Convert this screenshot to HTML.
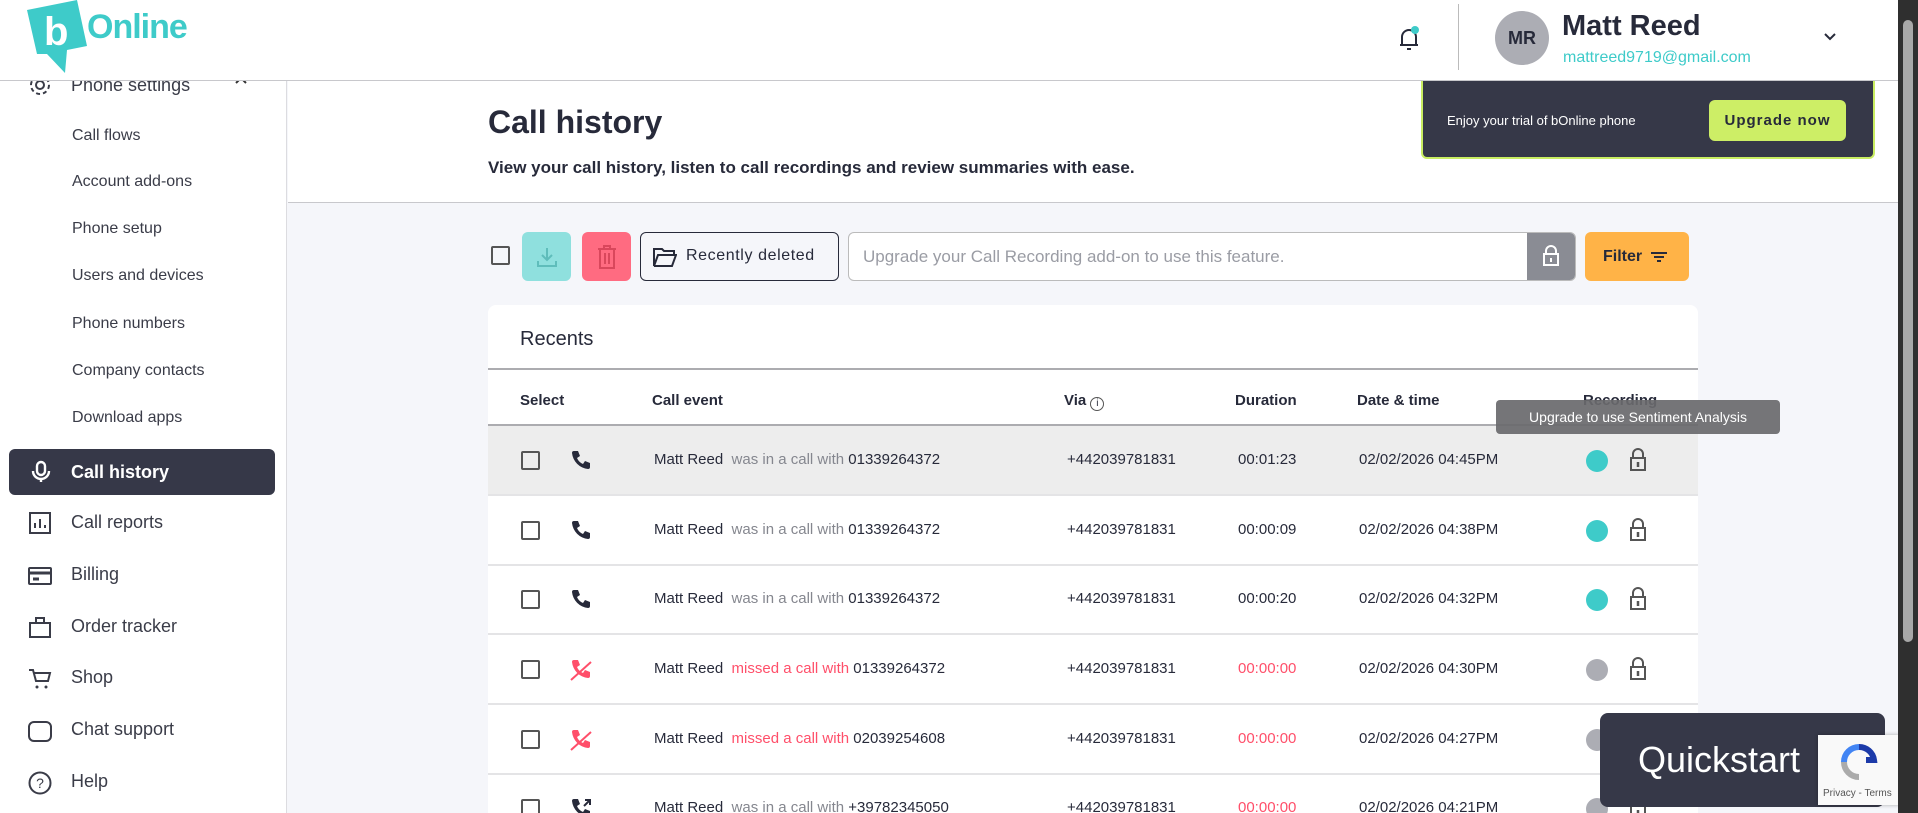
<!DOCTYPE html>
<html><head><meta charset="utf-8"><style>
*{box-sizing:border-box;margin:0;padding:0}
html,body{width:1918px;height:813px;overflow:hidden}
body{font-family:"Liberation Sans",sans-serif;color:#272a3a;background:#f5f6fa;position:relative}
.a{position:absolute}
.hdr{left:0;top:0;width:1898px;height:81px;background:#fff;border-bottom:1px solid #c8c8cc;z-index:5}
.side{left:0;top:81px;width:287px;height:732px;background:#fff;border-right:1px solid #dcdce0;overflow:hidden}
.sub{left:72px;font-size:16px;color:#3a3c48}
.nav{left:71px;font-size:18px;color:#3a3c48}
.ico{left:28px;width:24px;height:24px}
.top{left:288px;top:81px;width:1610px;height:122px;background:#fff;border-bottom:1px solid #c8c8cc}
.card{left:488px;top:305px;width:1210px;height:508px;background:#fff;border-radius:8px 8px 0 0}
.row{left:488px;width:1210px;height:70px;border-bottom:2px solid #e4e4e6;font-size:15px}
.th{font-size:15px;font-weight:bold;top:392px}
</style></head><body>
<div class="a hdr">
 <svg class="a" style="left:27px;top:0" width="185" height="76" viewBox="0 0 185 76">
  <path d="M0 10 L50 0 L60 46 L40 50 L38 73 L20 54 L10 54 Z" fill="#3ecbc9"/>
  <text x="17" y="45" font-family="Liberation Sans" font-weight="bold" font-size="40" fill="#fff">b</text>
  <text x="60" y="38" font-family="Liberation Sans" font-weight="bold" font-size="34" letter-spacing="-1" fill="#3ecbc9">Online</text>
 </svg>
 <svg class="a" style="left:1397px;top:25px" width="26" height="28" viewBox="0 0 26 28"><path d="M5 20 V12 a7 7 0 0 1 14 0 V20 H3 M21 20 H3 M10 24 h4" fill="none" stroke="#272a3a" stroke-width="2"/><circle cx="18" cy="5" r="4" fill="#3ecbc9"/></svg>
 <div class="a" style="left:1458px;top:4px;width:1px;height:66px;background:#bbb"></div>
 <div class="a" style="left:1495px;top:11px;width:54px;height:54px;border-radius:50%;background:#acadb4;font-weight:bold;font-size:18px;line-height:54px;text-align:center;color:#272a3a">MR</div>
 <div class="a" style="left:1562px;top:10px;font-size:29px;font-weight:bold">Matt Reed</div>
 <div class="a" style="left:1563px;top:49px;font-size:16px;color:#3ecbc9">mattreed9719@gmail.com</div>
 <svg class="a" style="left:1823px;top:32px" width="14" height="10"><path d="M2 2 L7 7 L12 2" fill="none" stroke="#272a3a" stroke-width="2"/></svg>
</div>
<div class="a" style="left:1898px;top:0;width:20px;height:813px;background:#2f2f2f;z-index:10"><div style="position:absolute;left:5px;top:20px;width:10px;height:622px;border-radius:5px;background:#a8a8a8"></div></div>
<div class="a side">
 <svg class="a" style="left:28px;top:-8px" width="24" height="24" viewBox="0 0 24 24"><circle cx="12" cy="12" r="4" fill="none" stroke="#3a3c48" stroke-width="2"/><circle cx="12" cy="12" r="9" fill="none" stroke="#3a3c48" stroke-width="2" stroke-dasharray="4 3"/></svg>
 <div class="a nav" style="top:-6px">Phone settings</div>
 <svg class="a" style="left:234px;top:-6px" width="14" height="10"><path d="M2 8 L7 3 L12 8" fill="none" stroke="#333" stroke-width="2"/></svg>
 <div class="a sub" style="top:46px">Call flows</div>
 <div class="a sub" style="top:92px">Account add-ons</div>
 <div class="a sub" style="top:139px">Phone setup</div>
 <div class="a sub" style="top:186px">Users and devices</div>
 <div class="a sub" style="top:234px">Phone numbers</div>
 <div class="a sub" style="top:281px">Company contacts</div>
 <div class="a sub" style="top:328px">Download apps</div>
 <div class="a" style="left:9px;top:368px;width:266px;height:46px;background:#363848;border-radius:6px"></div>
 <svg class="a" style="left:29px;top:379px" width="24" height="24" viewBox="0 0 24 24"><rect x="8" y="2" width="8" height="13" rx="4" fill="none" stroke="#fff" stroke-width="2.4"/><path d="M4 11 a8 8 0 0 0 16 0 M12 19 v3" fill="none" stroke="#fff" stroke-width="2.4"/></svg>
 <div class="a nav" style="top:381px;color:#fff;font-weight:bold">Call history</div>
 <svg class="a ico" style="top:430px" viewBox="0 0 24 24"><rect x="2" y="2" width="20" height="20" fill="none" stroke="#3a3c48" stroke-width="2"/><path d="M7 17v-5M12 17V8M17 17v-3" stroke="#3a3c48" stroke-width="2"/></svg>
 <div class="a nav" style="top:431px">Call reports</div>
 <svg class="a ico" style="top:483px" viewBox="0 0 24 24"><rect x="1" y="4" width="22" height="16" rx="1" fill="none" stroke="#3a3c48" stroke-width="2"/><path d="M1 9h22M5 15h6" stroke="#3a3c48" stroke-width="3"/></svg>
 <div class="a nav" style="top:483px">Billing</div>
 <svg class="a ico" style="top:534px" viewBox="0 0 24 24"><rect x="2" y="8" width="20" height="14" fill="none" stroke="#3a3c48" stroke-width="2"/><path d="M8 8V3h8v5" fill="none" stroke="#3a3c48" stroke-width="2"/></svg>
 <div class="a nav" style="top:535px">Order tracker</div>
 <svg class="a ico" style="top:586px" viewBox="0 0 24 24"><path d="M1 3h4l3 11h12l2-8H6" fill="none" stroke="#3a3c48" stroke-width="2"/><circle cx="9" cy="20" r="1.5" fill="#3a3c48"/><circle cx="18" cy="20" r="1.5" fill="#3a3c48"/></svg>
 <div class="a nav" style="top:586px">Shop</div>
 <svg class="a ico" style="top:638px" viewBox="0 0 24 24"><rect x="1" y="3" width="22" height="19" rx="5" fill="none" stroke="#3a3c48" stroke-width="2"/></svg>
 <div class="a nav" style="top:638px">Chat support</div>
 <svg class="a ico" style="top:690px" viewBox="0 0 24 24"><circle cx="12" cy="12" r="10.5" fill="none" stroke="#3a3c48" stroke-width="2"/><text x="12" y="17" text-anchor="middle" font-size="14" font-family="Liberation Sans" fill="#3a3c48">?</text></svg>
 <div class="a nav" style="top:690px">Help</div>
</div>
<div class="a top"></div>
<div class="a" style="left:488px;top:104px;font-size:32px;font-weight:bold">Call history</div>
<div class="a" style="left:488px;top:158px;font-size:17px;font-weight:bold;color:#272a3a">View your call history, listen to call recordings and review summaries with ease.</div>
<div class="a" style="left:1421px;top:81px;width:454px;height:78px;background:#363848;border:2px solid #c9ed62;border-top:none;border-radius:0 0 6px 6px;z-index:6">
 <div class="a" style="left:24px;top:32px;font-size:13px;color:#fff">Enjoy your trial of bOnline phone</div>
 <div class="a" style="left:286px;top:19px;width:137px;height:41px;background:#cdee66;border-radius:6px;font-size:15px;font-weight:bold;letter-spacing:1px;text-align:center;line-height:41px;color:#272a3a">Upgrade now</div>
</div>
<div class="a" style="left:491px;top:246px;width:19px;height:19px;border:2px solid #555;border-radius:2px"></div>
<div class="a" style="left:522px;top:232px;width:49px;height:49px;background:#8fe0de;border-radius:6px"><svg style="position:absolute;left:13px;top:13px" width="24" height="24" viewBox="0 0 24 24"><path d="M12 3v12M7 10l5 5 5-5M3 16v5h18v-5" fill="none" stroke="#5fbdbb" stroke-width="2"/></svg></div>
<div class="a" style="left:582px;top:232px;width:49px;height:49px;background:#ff6b81;border-radius:6px"><svg style="position:absolute;left:13px;top:12px" width="24" height="26" viewBox="0 0 24 26"><path d="M3 5h18M9 5V2h6v3M5 5v19h14V5M10 9v11M14 9v11" fill="none" stroke="#d9475c" stroke-width="2"/></svg></div>
<div class="a" style="left:640px;top:232px;width:199px;height:49px;border:1.5px solid #272a3a;border-radius:6px;background:#f5f6fa">
 <svg style="position:absolute;left:12px;top:14px" width="24" height="20" viewBox="0 0 24 20"><path d="M1 2h8l2 2h10v4H5L1 19V2zM5 8h18l-4 11H1" fill="none" stroke="#272a3a" stroke-width="2"/></svg>
 <div style="position:absolute;left:45px;top:14px;font-size:16px;letter-spacing:.6px">Recently deleted</div>
</div>
<div class="a" style="left:848px;top:232px;width:728px;height:49px;border:1.5px solid #bbb;border-radius:6px;background:#fff;overflow:hidden">
 <div style="position:absolute;left:14px;top:14px;font-size:17px;color:#9a9ca4">Upgrade your Call Recording add-on to use this feature.</div>
 <div style="position:absolute;right:0;top:0;width:48px;height:49px;background:#8a8c94"><svg style="position:absolute;left:15px;top:12px" width="18" height="22" viewBox="0 0 18 22"><path d="M4 9V6a5 5 0 0 1 10 0v3" fill="none" stroke="#fff" stroke-width="2"/><rect x="2" y="9" width="14" height="11" fill="none" stroke="#fff" stroke-width="2"/><path d="M9 13v4" stroke="#fff" stroke-width="2"/></svg></div>
</div>
<div class="a" style="left:1585px;top:232px;width:104px;height:49px;background:#ffb347;border-radius:6px;font-size:16px;font-weight:bold;line-height:49px;padding-left:18px">Filter <span style="display:inline-block;vertical-align:middle;margin-left:4px;width:16px;height:10px;border-top:2px solid #272a3a;position:relative"><i style="position:absolute;left:3px;top:2px;width:10px;border-top:2px solid #272a3a"></i><i style="position:absolute;left:6px;top:6px;width:4px;border-top:2px solid #272a3a"></i></span></div>
<div class="a card"></div>
<div class="a" style="left:520px;top:328px;font-size:20px">Recents</div>
<div class="a" style="left:488px;top:368px;width:1210px;height:2px;background:#acacb0"></div>
<div class="a th" style="left:520px">Select</div>
<div class="a th" style="left:652px">Call event</div>
<div class="a th" style="left:1064px">Via <span style="display:inline-block;width:14px;height:14px;border:1px solid #555;border-radius:50%;font-size:10px;text-align:center;line-height:12px;font-weight:normal;vertical-align:-1px">i</span></div>
<div class="a th" style="left:1235px">Duration</div>
<div class="a th" style="left:1357px">Date &amp; time</div>
<div class="a th" style="left:1583px">Recording</div>
<div class="a" style="left:488px;top:424px;width:1210px;height:2px;background:#acacb0"></div>

<div class="a row" style="top:426px;background:#ededed"></div>
<div class="a row" style="top:496px"></div>
<div class="a row" style="top:565px"></div>
<div class="a row" style="top:635px"></div>
<div class="a row" style="top:705px"></div>
<div class="a row" style="top:774px;border-bottom:none;height:39px"></div>

<div id="rows"></div>
<script>
var d=[["was in a call with","01339264372","00:01:23","04:45PM",0],["was in a call with","01339264372","00:00:09","04:38PM",0],["was in a call with","01339264372","00:00:20","04:32PM",0],["missed a call with","01339264372","00:00:00","04:30PM",1],["missed a call with","02039254608","00:00:00","04:27PM",1],["was in a call with","+39782345050","00:00:00","04:21PM",2]];
var tops=[426,496,565,635,705,774],h="";
var ph='<path d="M5 2 h4 l2 5 -3 2 a11 11 0 0 0 6 6 l2 -3 5 2 v4 a2 2 0 0 1 -2 2 A18 18 0 0 1 3 4 a2 2 0 0 1 2 -2z" fill="COL"/>';
d.forEach(function(r,i){var t=tops[i],red=r[4]==1;
h+='<div class="a" style="left:521px;top:'+(t+25)+'px;width:19px;height:19px;border:2px solid #555;border-radius:2px"></div>';
h+='<svg class="a" style="left:569px;top:'+(t+23)+'px" width="24" height="24" viewBox="0 0 24 24">'+ph.replace("COL",red?"#ff4f6a":"#272a3a")+(red?'<path d="M2 22 L22 4" stroke="#ff4f6a" stroke-width="2"/>':'')+(r[4]==2?'<path d="M15 9 L21 3 M16 3h5v5" stroke="#272a3a" stroke-width="2" fill="none"/>':'')+'</svg>';
h+='<div class="a" style="left:654px;top:'+(t+25)+'px;font-size:15px;white-space:nowrap"><span style="color:#272a3a">Matt Reed</span>&nbsp; <span style="color:'+(red?"#ff4f6a":"#85878f")+'">'+r[0]+'</span> <span>'+r[1]+'</span></div>';
h+='<div class="a" style="left:1067px;top:'+(t+25)+'px;font-size:15px">+442039781831</div>';
h+='<div class="a" style="left:1238px;top:'+(t+25)+'px;font-size:15px;color:'+(r[2]=="00:00:00"?"#ff4f6a":"#272a3a")+'">'+r[2]+'</div>';
h+='<div class="a" style="left:1359px;top:'+(t+25)+'px;font-size:15px">02/02/2026 '+r[3]+'</div>';
h+='<div class="a" style="left:1586px;top:'+(t+24)+'px;width:22px;height:22px;border-radius:50%;background:'+(i<3?"#3ecbc9":"#acadb4")+'"></div>';
h+='<svg class="a" style="left:1629px;top:'+(t+22)+'px" width="18" height="24" viewBox="0 0 18 24"><path d="M4 10V6a5 5 0 0 1 10 0v4" fill="none" stroke="#555" stroke-width="2"/><rect x="2" y="10" width="14" height="12" fill="none" stroke="#555" stroke-width="2"/><path d="M9 14v5" stroke="#555" stroke-width="2.5"/></svg>';});
document.getElementById("rows").innerHTML=h;
</script>
<div class="a" style="left:1496px;top:400px;width:284px;height:34px;background:rgba(105,105,108,.92);border-radius:4px;color:#fff;font-size:14px;text-align:center;line-height:34px;z-index:7">Upgrade to use Sentiment Analysis</div>
<div class="a" style="left:1600px;top:713px;width:285px;height:94px;background:#363848;border-radius:8px;z-index:8"><div style="position:absolute;left:38px;top:26px;font-size:36px;color:#fff">Quickstart</div></div>
<div class="a" style="left:1818px;top:735px;width:82px;height:70px;background:#f9f9f9;box-shadow:0 0 4px rgba(0,0,0,.3);z-index:9">
 <svg style="position:absolute;left:22px;top:8px" width="38" height="38" viewBox="0 0 38 38"><path d="M19 4 a15 15 0 0 1 15 13 l-8 0" fill="none" stroke="#1c3aa9" stroke-width="6"/><path d="M4 19 a15 15 0 0 1 15 -15" fill="none" stroke="#4285f4" stroke-width="6"/><path d="M19 34 a15 15 0 0 1 -15 -15" fill="none" stroke="#ababab" stroke-width="6"/></svg>
 <div style="position:absolute;left:5px;top:53px;font-size:10px;color:#555">Privacy - Terms</div>
</div>
</body></html>
